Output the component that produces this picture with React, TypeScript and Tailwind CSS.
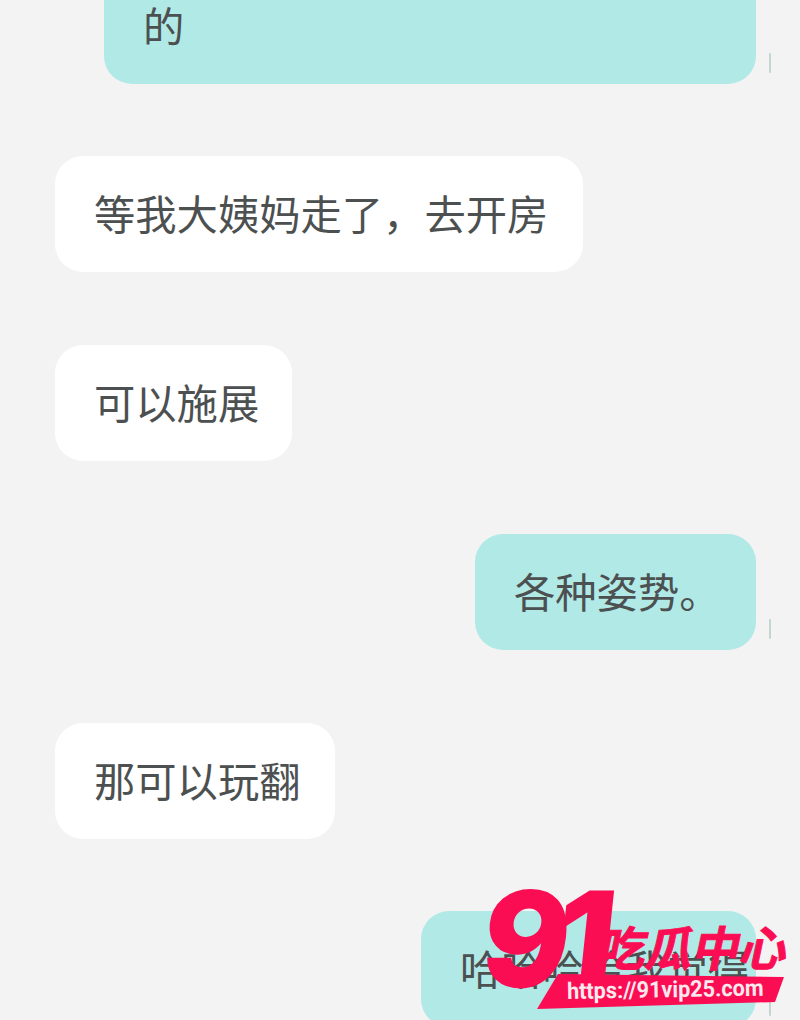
import React from "react";

const cjk = { fontFamily: '"Noto Sans CJK SC", "Liberation Sans", sans-serif' };

function Bubble({ text, mine, width, extra = "" }: { text: string; mine?: boolean; width: string; extra?: string }) {
  return (
    <div className={(mine ? "flex justify-end pr-[44px] " : "flex justify-start pl-[55px] ") + extra}>
      <div
        className={
          (mine ? "bg-[#b0e9e6] " : "bg-white ") +
          width +
          " relative flex h-[116px] shrink-0 items-center rounded-[28px] pb-[3px] pl-[39px] text-[41.3px] leading-none font-normal whitespace-nowrap text-[#4c5050]"
        }
      >
        <span>{text}</span>
        {mine && <span className="absolute top-[85px] right-[-15px] h-[20px] w-[2px] rounded-full bg-[#c3d6d2]" />}
      </div>
    </div>
  );
}

function Logo() {
  return (
    <div className="absolute top-[880px] left-[484px] h-[135px] w-[310px]">
      <span className="absolute top-[42px] left-[117px] -skew-x-12 text-[47px] leading-none font-bold whitespace-nowrap text-[#fb0d54] [-webkit-text-stroke:1px_#fb0d54]">
        吃瓜中心
      </span>
      <span
        className="absolute top-[-6px] left-[0px] -skew-x-6 text-[130px] leading-none font-extrabold tracking-[-12px] text-[#fb0d54] [-webkit-text-stroke:2px_#fb0d54]"
        style={{ fontFamily: '"Inter", "Liberation Sans", sans-serif' }}
      >
        91
      </span>
      <div className="absolute top-[94px] left-[53px] flex h-[35px] w-[247px] items-center bg-[#fb0d54] pl-[30px] [clip-path:polygon(21px_0,100%_3px,238px_28px,0_100%)]">
        <span
          className="origin-left -rotate-1 scale-x-[0.94] text-[23px] leading-none font-bold whitespace-nowrap text-[#fde8ee]"
          style={{ fontFamily: '"Roboto", "Liberation Sans", sans-serif' }}
        >
          https://91vip25.com
        </span>
      </div>
    </div>
  );
}

export default function App() {
  return (
    <div className="relative h-[1020px] w-[800px] overflow-hidden bg-[#f3f3f3]" style={cjk}>
      <div className="-mt-[32px] flex flex-col gap-[73px]">
        <Bubble text="的" mine width="w-[652px]" extra="-mb-px" />
        <Bubble text="等我大姨妈走了，去开房" width="w-[528px]" />
        <Bubble text="可以施展" width="w-[237px]" />
        <Bubble text="各种姿势。" mine width="w-[281px]" />
        <Bubble text="那可以玩翻" width="w-[280px]" />
        <Bubble text="哈哈哈哈我觉得" mine width="w-[335px]" extra="-mt-px" />
      </div>
      <Logo />
    </div>
  );
}
